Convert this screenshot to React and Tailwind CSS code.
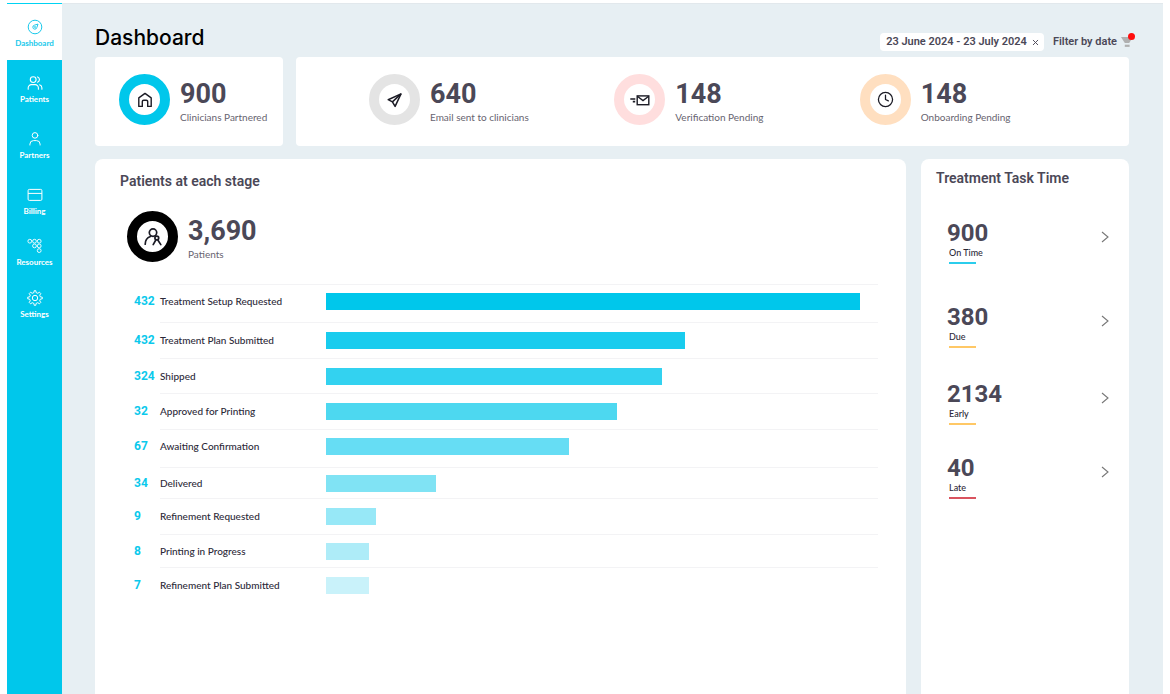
import { Clock, X } from 'lucide-react';

const NAV = [
  { label: 'Dashboard', icon: GaugeIcon, box: 'pt-[15px] h-14', active: true },
  { label: 'Patients', icon: UsersIcon, box: 'pt-[15px] h-14' },
  { label: 'Partners', icon: UserIcon, box: 'pt-[15px] h-14' },
  { label: 'Billing', icon: CardIcon, box: 'pt-[15px] h-14' },
  { label: 'Resources', icon: NodesIcon, box: 'pt-[10px] h-[52px]' },
  { label: 'Settings', icon: GearIcon, box: 'pt-[10px] h-[52px]' },
];

const STATS = [
  { value: '640', label: 'Email sent to clinicians', icon: PlaneIcon, ring: 'border-[#e4e4e4]' },
  { value: '148', label: 'Verification Pending', icon: MailIcon, ring: 'border-[#ffdede]' },
  { value: '148', label: 'Onboarding Pending', icon: ClockIcon, ring: 'border-[#ffdfc0]' },
];

const STAGES = [
  { count: 432, label: 'Treatment Setup Requested', pct: 96.8, row: 'h-[38px]', pad: 'pb-1', bar: 'bg-[#00c7eb]' },
  { count: 432, label: 'Treatment Plan Submitted', pct: 65, row: 'h-9', pad: '', bar: 'bg-[#19ccee]' },
  { count: 324, label: 'Shipped', pct: 60.8, row: 'h-[35px]', pad: '', bar: 'bg-[#33d2f0]' },
  { count: 32, label: 'Approved for Printing', pct: 52.8, row: 'h-9', pad: '', bar: 'bg-[#4dd8f0]' },
  { count: 67, label: 'Awaiting Confirmation', pct: 44, row: 'h-[38px]', pad: 'pb-1', bar: 'bg-[#66ddf4]' },
  { count: 34, label: 'Delivered', pct: 19.9, row: 'h-[31px]', pad: '', bar: 'bg-[#80e3f4]' },
  { count: 9, label: 'Refinement Requested', pct: 9, row: 'h-9', pad: '', bar: 'bg-[#97e8f7]' },
  { count: 8, label: 'Printing in Progress', pct: 7.7, row: 'h-[33px]', pad: '', bar: 'bg-[#aeecf8]' },
  { count: 7, label: 'Refinement Plan Submitted', pct: 7.7, row: 'h-9', pad: '', bar: 'bg-[#c9f2fa]' },
];

const TASKS = [
  { value: '900', label: 'On Time', line: 'bg-[#2bcdec]', space: 'mt-[33px]' },
  { value: '380', label: 'Due', line: 'bg-[#ffc866]', space: 'mt-[41px]' },
  { value: '2134', label: 'Early', line: 'bg-[#ffc866]', space: 'mt-[34px]' },
  { value: '40', label: 'Late', line: 'bg-[#d9535f]', space: 'mt-[31px]' },
];

function GaugeIcon({ className }) {
  return (
    <svg className={className} viewBox="0 0 16 16" fill="none" stroke="currentColor">
      <circle cx="8" cy="8" r="6.8" />
      <path d="M11 5.1 7.4 6.2a2 2 0 1 0 2.4 2.4z" strokeLinejoin="round" />
      <circle cx="8" cy="8" r=".5" />
    </svg>
  );
}

function UsersIcon({ className }) {
  return (
    <svg className={className} viewBox="0 0 16 16" fill="none" stroke="currentColor" strokeWidth="1.1" strokeLinecap="round">
      <circle cx="6.2" cy="4.6" r="2.9" />
      <path d="M1.2 14.2v-1.4a3.2 3.2 0 0 1 3.2-3.2h3.8a3.2 3.2 0 0 1 3.2 3.2v1.4" />
      <path d="M10.6 1.9a2.9 2.9 0 0 1 0 5.4M12.6 9.8a3.2 3.2 0 0 1 2.3 3v1.4" />
    </svg>
  );
}

function UserIcon({ className }) {
  return (
    <svg className={className} viewBox="0 0 16 16" fill="none" stroke="currentColor" strokeLinecap="round">
      <circle cx="8" cy="4.4" r="2.8" />
      <path d="M2.9 14v-.8a3.6 3.6 0 0 1 3.6-3.6h3a3.6 3.6 0 0 1 3.6 3.6v.8" />
    </svg>
  );
}

function CardIcon({ className }) {
  return (
    <svg className={className} viewBox="0 0 16 16" fill="none" stroke="currentColor">
      <rect x="1.1" y="2.4" width="13.8" height="11" rx="1.2" />
      <path d="M1.1 6.4h13.8" />
    </svg>
  );
}

function NodesIcon({ className }) {
  return (
    <svg className={className} viewBox="0 0 16 16" fill="none" stroke="currentColor" strokeWidth=".9">
      <circle cx="2.8" cy="3.2" r="1.9" />
      <circle cx="7.5" cy="3.2" r="1.9" />
      <circle cx="12.2" cy="3.2" r="1.9" />
      <circle cx="7.5" cy="7.9" r="1.9" />
      <circle cx="12.2" cy="7.9" r="1.9" />
      <circle cx="12.2" cy="12.6" r="1.9" />
    </svg>
  );
}

function GearIcon({ className }) {
  return (
    <svg className={className} viewBox="0 0 16 16" fill="none" stroke="currentColor" strokeLinejoin="round">
      <path d="M6.9 2.6 7.2.7h1.6l.3 1.9 1.7.7 1.6-1.1 1.4 1.4-1.1 1.6.7 1.7 1.9.3v1.6l-1.9.3-.7 1.7 1.1 1.6-1.4 1.4-1.6-1.1-1.7.7-.3 1.9H7.2l-.3-1.9-1.7-.7-1.6 1.1-1.4-1.4 1.1-1.6-.7-1.7-1.9-.3V7.2l1.9-.3.7-1.7-1.1-1.6 1.4-1.4 1.6 1.1z" />
      <circle cx="8" cy="8" r="2.7" />
    </svg>
  );
}

function HouseIcon() {
  return (
    <svg className="w-4 h-4" viewBox="0 0 16 16" fill="none" stroke="currentColor" strokeWidth="1.4" strokeLinejoin="round">
      <path d="M1.8 5.9 8 1.4l6.2 4.5v8.5h-3.5V9.6a1.4 1.4 0 0 0-1.4-1.4H6.7a1.4 1.4 0 0 0-1.4 1.4v4.8H1.8z" />
    </svg>
  );
}

function PlaneIcon() {
  return (
    <svg className="w-4 h-4" viewBox="0 0 16 16" fill="none" stroke="currentColor" strokeWidth="1.5" strokeLinejoin="round">
      <path d="M14 1.9 1.2 7.7l4.2 2.2 2.7 4.5z" />
      <path d="M14 1.9 5.4 9.9" />
    </svg>
  );
}

function MailIcon() {
  return (
    <svg className="w-5 h-4" viewBox="0 0 20 16" fill="none" stroke="currentColor" strokeWidth="1.4">
      <rect x="7.2" y="3.9" width="11.6" height="8.8" />
      <path d="m7.3 4.2 5.7 4.3 5.7-4.3" />
      <path d="M.3 7h5M2.8 9.6h2.4" strokeWidth="1.7" />
    </svg>
  );
}

function ClockIcon() {
  return <Clock size={17} strokeWidth={1.8} />;
}

function PatientsIcon() {
  return (
    <svg className="w-[18px] h-[18px]" viewBox="0 0 18 18" fill="none" stroke="currentColor" strokeWidth="1.7" strokeLinecap="round">
      <circle cx="9" cy="4.6" r="3.7" />
      <path d="M1.2 16.2c0-3.8 2.2-6.6 5.2-7.7" />
      <circle cx="12.8" cy="10" r="1.9" />
      <path d="M9.2 16.6 11.8 12M13.8 12l3 4.6" />
    </svg>
  );
}

function FilterIcon() {
  return (
    <svg className="w-[14px] h-3" viewBox="0 0 14 12" fill="#b0b0b0">
      <path d="M0 1h12L8.2 7H3.8z" />
      <path d="M3.8 8.7h4.8v2.2H3.8z" />
    </svg>
  );
}

function Chevron() {
  return (
    <svg className="w-2 h-3" viewBox="0 0 8 12" fill="none" stroke="#777" strokeWidth="1.1">
      <path d="m1 1 6 5-6 5" />
    </svg>
  );
}

function Stat({ value, label, icon: Icon, ring }) {
  return (
    <div className="flex items-center gap-[10px]">
      <div className={`w-[51px] h-[51px] shrink-0 rounded-full border-[10px] bg-white text-[#1b1b25] flex items-center justify-center ${ring}`}>
        <Icon />
      </div>
      <div className="pt-[2px]">
        <p className="text-[27px] leading-8 font-bold">{value}</p>
        <p className="font-['Lato',sans-serif] text-[10px] leading-[14px] text-[#67646f] whitespace-nowrap">{label}</p>
      </div>
    </div>
  );
}

function Sidebar() {
  return (
    <nav className="w-[55px] shrink-0 bg-[#00c7eb] border-t border-cyan-400 font-['Lato',sans-serif]">
      {NAV.map(({ label, icon: Icon, box, active }) => (
        <a
          key={label}
          href="#"
          className={`flex flex-col items-center gap-[3px] ${box} ${active ? 'bg-white text-[#19c9eb]' : 'text-white'}`}
        >
          <Icon className="w-4 h-4 shrink-0" />
          <span className="text-[8px] leading-[10px] font-bold">{label}</span>
        </a>
      ))}
    </nav>
  );
}

export default function App() {
  return (
    <div className="min-h-screen bg-white px-[7px] pt-[3px] flex flex-col font-['Roboto',sans-serif] text-[#4b4857]">
      <div className="flex-1 flex">
        <Sidebar />

        <main className="flex-1 min-w-0 bg-[#e7eff3] border-t border-[#e2e8ec] pl-[33px] pr-[34px] flex flex-col">
          <header className="h-[53px] flex items-end justify-between pb-[6px] -mr-[6px]">
            <h1 className="font-['Inter',sans-serif] text-[21px] leading-[26px] font-medium text-black">Dashboard</h1>
            <div className="flex items-center gap-[9px] text-[11px] font-semibold">
              <div className="flex items-center gap-1 h-[18px] pl-[6px] pr-1 rounded-sm bg-white">
                <span>23 June 2024 - 23 July 2024</span>
                <button type="button" aria-label="Clear dates">
                  <X size={9} strokeWidth={2.5} />
                </button>
              </div>
              <button type="button" className="relative flex items-center gap-1">
                Filter by date
                <FilterIcon />
                <span className="absolute -top-px right-0 w-[7px] h-[7px] rounded-full bg-[#ff0d0d]"></span>
              </button>
            </div>
          </header>

          <section className="flex gap-[13px]">
            <div className="w-[188px] shrink-0 bg-white rounded pl-6 pt-[17px] pb-[21px]">
              <Stat value="900" label="Clinicians Partnered" icon={HouseIcon} ring="border-[#00c7eb]" />
            </div>
            <div className="flex-1 grid grid-cols-3 bg-white rounded pl-[73px] pr-6 pt-[17px] pb-[21px]">
              {STATS.map(s => <Stat key={s.label} {...s} />)}
            </div>
          </section>

          <section className="flex-1 flex gap-[15px] mt-[13px]">
            <div className="flex-1 min-w-0 bg-white rounded-t-lg pt-3 pr-7">
              <h2 className="pl-[25px] text-sm leading-5 font-semibold">Patients at each stage</h2>
              <div className="pl-8 mt-5">
                <Stat value="3,690" label="Patients" icon={PatientsIcon} ring="border-black" />
              </div>

              <ul className="pl-[39px] mt-[22px]">
                {STAGES.map(s => (
                  <li key={s.label} className={`flex items-stretch ${s.row}`}>
                    <span className={`w-[26px] flex items-center text-xs font-bold text-[#0bc9ec] ${s.pad}`}>{s.count}</span>
                    <div className={`flex-1 flex items-center border-t border-[#f3f3f5] ${s.pad}`}>
                      <span className="w-[166px] shrink-0 font-['Lato',sans-serif] text-[10px] font-medium text-[#2c2938]">{s.label}</span>
                      <div className="flex-1">
                        <div className={`h-[17px] ${s.bar}`} style={{ width: `${s.pct}%` }}></div>
                      </div>
                    </div>
                  </li>
                ))}
              </ul>
            </div>

            <div className="w-[208px] shrink-0 bg-white rounded-t-lg pt-[9px] pl-[15px] pr-5">
              <h2 className="text-sm leading-5 font-semibold">Treatment Task Time</h2>
              {TASKS.map(t => (
                <a key={t.label} href="#" className={`flex justify-between pl-[11px] ${t.space}`}>
                  <div>
                    <p className="text-2xl leading-6 font-bold">{t.value}</p>
                    <p className="pl-[2px] font-['Lato',sans-serif] text-[9px] leading-4 font-medium text-[#2c2938]">{t.label}</p>
                    <div className={`ml-[2px] mt-px w-[27px] h-[2px] ${t.line}`}></div>
                  </div>
                  <span className="h-8 flex items-center">
                    <Chevron />
                  </span>
                </a>
              ))}
            </div>
          </section>
        </main>
      </div>
    </div>
  );
}
